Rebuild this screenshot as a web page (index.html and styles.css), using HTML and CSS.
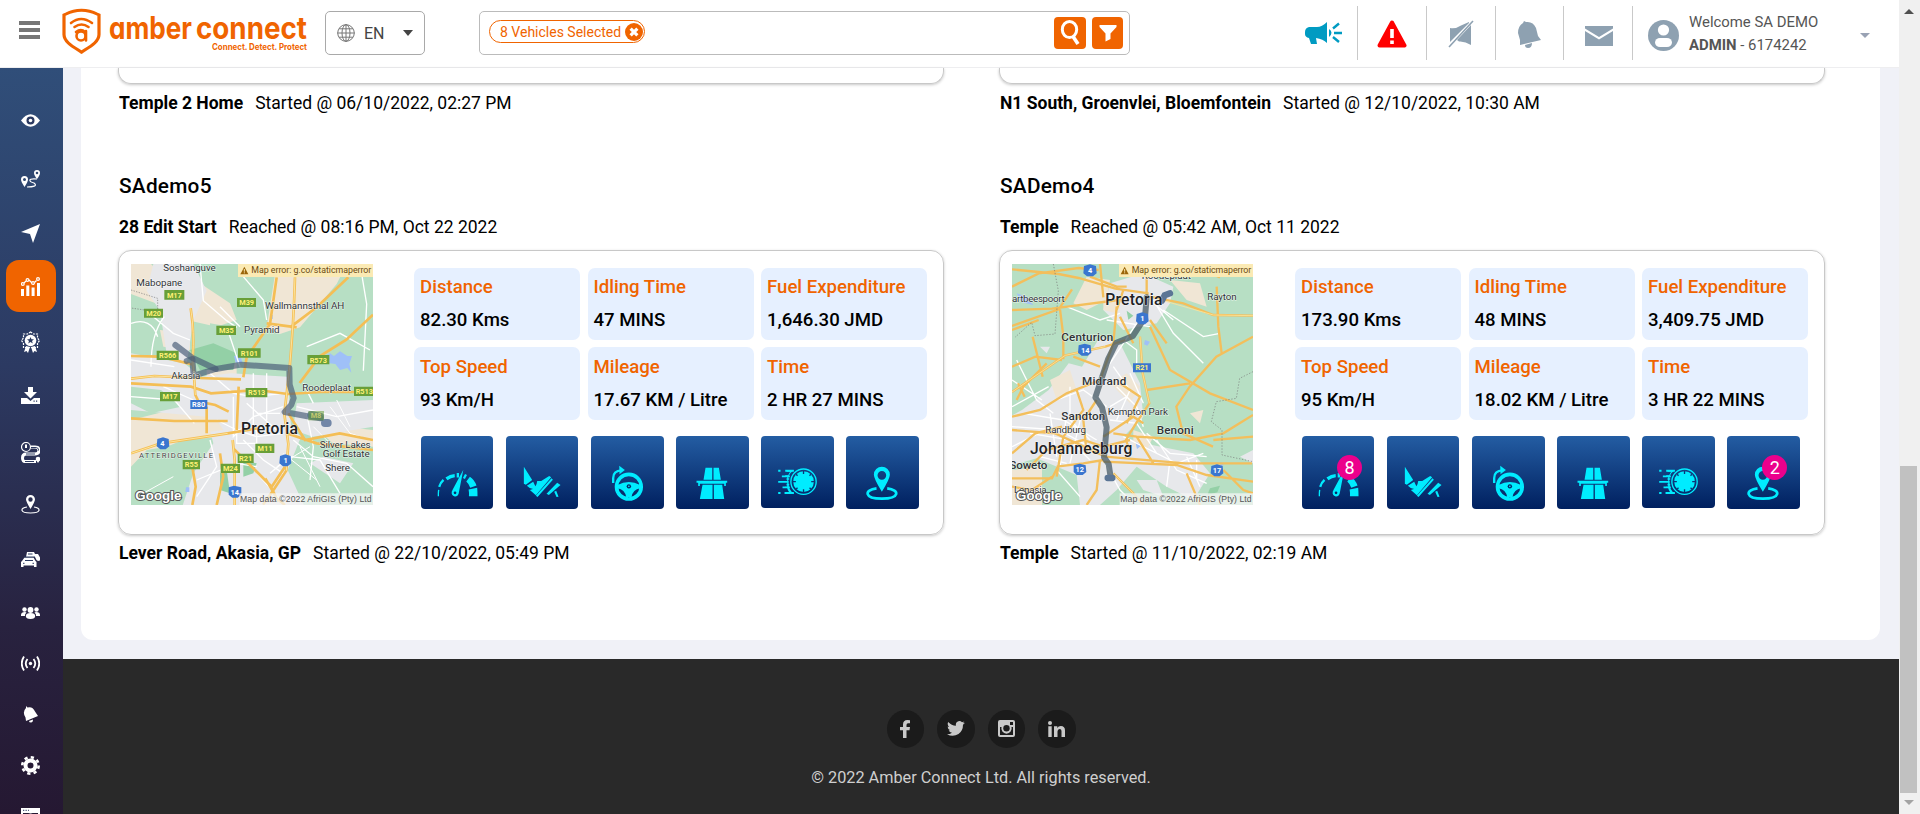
FILE: index.html
```html
<!DOCTYPE html>
<html lang="en">
<head>
<meta charset="utf-8">
<title>Amber Connect</title>
<link rel="stylesheet" href="styles.css">
</head>
<body>
<svg class="defs" width="0" height="0" aria-hidden="true">
  <symbol id="i-speed" viewBox="33 33 219 219">
    <g fill="none" stroke="#00ecff">
      <path d="M85.500 214v-6q0-6 1-13" stroke-width="4"/>
      <path d="M88 186q4-13 13-21" stroke-width="7"/>
      <path d="M110 162q12-9 25-10" stroke-width="10"/>
      <path d="M141 151h7M163 153l6 3" stroke-width="14"/>
    </g>
    <path fill="#00ecff" d="M181 155q14 9 20 27l-19 7q-4-12-12-19zM203 189q1 12 1 25h-26q1-10-1-20zM161 134l-14 72q-3 10-12 9-11-3-9-14l3-7z"/>
    <circle cx="136" cy="204" r="4" fill="#04286a"/>
  </symbol>
  <symbol id="i-pedal" viewBox="291 33 216 219">
    <path fill="#00ecff" d="M344 125l25 40-19 14-6-3zM372 170l9 19-9 3q-12-2-19-10zM384 168h12l24-15 6 4-46 54-18-16q20-4 22-27zM427 160l4 4-46 52-5-4zM444 173l10 7-35 30-7-4zM435 200l6-3 7 18-6 1z"/>
  </symbol>
  <symbol id="i-wheel" viewBox="546 33 216 219">
    <path fill="none" stroke="#00ecff" stroke-width="7" d="M612 174v-15q0-22 25-23"/>
    <path fill="#00ecff" d="M630 122l17 13-16 13z"/>
    <circle cx="659" cy="185" r="37" fill="none" stroke="#00ecff" stroke-width="11"/>
    <path fill="#00ecff" d="M625 180q34-18 68 0v10q-22 4-26 26h-16q-4-22-26-26z"/>
    <circle cx="659" cy="184" r="6.500" fill="#04286a"/><circle cx="659" cy="184" r="2.500" fill="#00ecff"/>
  </symbol>
  <symbol id="i-road" viewBox="801 33 216 219">
    <path fill="#00ecff" d="M889 128h20v36h-26zM913 128h16l6 36h-22zM862 167h92v6h-4v10h-5v-7h-73v7h-5v-10h-5zM880 179h30v43h-38zM914 179h25l6 43h-31z"/>
  </symbol>
  <symbol id="i-fast" viewBox="1056 33 216 216">
    <g fill="none" stroke="#00ecff">
      <circle cx="1183" cy="170" r="38" stroke-width="4"/>
      <path stroke-width="6" d="M1128 137.500h26M1126 204h28M1107 137.500h7M1107 204h7"/>
      <path stroke-width="5" d="M1118 154h24M1107 170.500h31M1120 187h22M1132 162h8M1132 179h8"/>
    </g>
    <path fill="#00ecff" d="M1132 135h23q-23 14-17 40 0 21 17 32h-23v-5h8q-5-7-6-13h-6v-4h6v-30h-6v-4h9q3-7 6-11h-11z"/>
    <circle cx="1183" cy="170" r="31" fill="#00ecff"/>
    <path stroke="#0b3478" stroke-width="4" d="M1183 138v9M1183 193v9M1151 170h9M1206 170h9M1161 148l4 4M1205 148l-4 4M1161 192l4-4M1205 192l-4-4"/>
  </symbol>
  <symbol id="i-pin" viewBox="1311 33 216 219">
    <path fill="#00ecff" fill-rule="evenodd" d="M1418 125a24 24 0 0 1 24 24q0 12-24 51-24-39-24-51a24 24 0 0 1 24-24zm0 13a13 13 0 1 0 0 26 13 13 0 0 0 0-26z"/>
    <path fill="none" stroke="#00ecff" stroke-width="8" d="M1402 190c-38 5-38 31 16 31s55-26 16-31"/>
  </symbol>
</svg>

<div class="app">
  <div class="page">
    <header class="header">
      <button class="burger" aria-label="Menu"><i></i><i></i><i></i></button>
      <svg class="logo" viewBox="0 0 246 46" width="246" height="46" fill="#f06400">
        <path fill="none" stroke="#f06400" stroke-width="3.200" d="M19.500 2.500c-5 0-11 1.500-15.500 4L2 7.500v21c0 8 9 13 17.500 19C28 41.500 37 36.500 37 28.500v-21l-2-1c-4.500-2.500-10.500-4-15.500-4z" transform="scale(1 .93)"/>
        <g fill="none" stroke="#f06400" stroke-width="2.600" stroke-linecap="round"><path d="M9 15q10-8 21 0M12.500 19q7-5 14 0"/><circle cx="19" cy="28" r="4.500"/><path d="M24 23v9.500M14 24q5-4 9 0"/></g>
        <text class="logo-name" x="47" y="31" textLength="83" lengthAdjust="spacingAndGlyphs">amber</text>
        <text class="logo-name" x="134" y="31" textLength="111" lengthAdjust="spacingAndGlyphs">connect</text>
        <text class="logo-tag" x="150" y="42" textLength="95" lengthAdjust="spacingAndGlyphs">Connect. Detect. Protect</text>
      </svg>
      <div class="lang">
        <svg width="18" height="18" viewBox="0 0 18 18" fill="none" stroke="#777" stroke-width="1"><circle cx="9" cy="9" r="8.300"/><ellipse cx="9" cy="9" rx="4" ry="8.300"/><path d="M9 .5v17M.5 9h17M2 4.800h14M2 13.200h14"/></svg>
        <span>EN</span><b class="caret"></b>
      </div>
      <div class="search">
        <div class="pill">8 Vehicles Selected
          <svg width="18" height="18" viewBox="0 0 17 17"><circle cx="8.500" cy="8.500" r="8.500" fill="#f06400"/><path d="M5.300 5.300l6.400 6.400M11.700 5.300l-6.400 6.400" stroke="#fff" stroke-width="3"/></svg>
        </div>
        <button class="sq first"><svg width="20" height="26" viewBox="0 0 20 26" fill="none" stroke="#fff" stroke-width="3"><ellipse cx="9.500" cy="9.500" rx="7.200" ry="8"/><path d="M13 16.500l5 7.500" stroke-width="3.600"/></svg></button>
        <button class="sq"><svg width="18" height="18" viewBox="0 0 18 18" fill="#fff"><path d="M.5 1h17v2l-6 6.500V15l-5 2.500v-8L.5 3z"/></svg></button>
      </div>
      <nav class="tools">
        <span class="tool t1"><svg width="38" height="24" viewBox="0 0 38 24" fill="#009bc2"><path d="M0 11q0-4 4-5h8q5 0 10-5v21q-4-4-11-5l1 6H6l-2-6q-4-1-4-4zM24 8q5 3.500 0 8z"/><path stroke="#009bc2" stroke-width="2.400" d="M28 7.500l6-5M29 12h8M28 16l6 5"/></svg></span>
        <span class="tool"><svg width="30" height="28" viewBox="0 0 30 28"><path d="M15 2.500L27.500 25.500h-25z" fill="red" stroke="red" stroke-width="4" stroke-linejoin="round"/><path d="M15 9v9M15 20.500v3.500" stroke="#fff" stroke-width="3.600"/></svg></span>
        <span class="tool"><svg width="26" height="28" viewBox="0 0 26 28" fill="#8ea1b1"><path d="M2 8q6 1 11-2.500L21 2v1L2 22zM23 5v20q-6-4-12-3.500L9 20z"/><path d="M25 1L1 27" stroke="#8ea1b1" stroke-width="1.600"/></svg></span>
        <span class="tool"><svg width="24" height="28" viewBox="0 0 24 28" fill="#8ea1b1"><path d="M7 1l2 1q7-1 10 6l2 8 3 4L3 25v-5L1 13Q1 6 6 3zM8 25l7-2q0 5-4 5-3 0-3-3z"/></svg></span>
        <span class="tool t5"><svg width="28" height="22" viewBox="0 0 28 22" fill="#8ea1b1"><path d="M0 1h28v2.500L14 12 0 3.500zM0 6l14 8.500L28 6v15H0z"/></svg></span>
        <div class="user">
          <svg width="31" height="31" viewBox="0 0 31 31"><circle cx="15.500" cy="15.500" r="15.500" fill="#8ea1b1"/><circle cx="15.500" cy="10" r="5.600" fill="#fff"/><rect x="7" y="18" width="17" height="9" rx="5" fill="#fff"/></svg>
          <p>Welcome SA DEMO<br><b>ADMIN</b> - 6174242</p>
          <b class="caret light"></b>
        </div>
      </nav>
    </header>

    <div class="body">
      <aside class="side">
        <a style="height:52px"><svg width="19" height="13" viewBox="0 0 19 13"><path d="M0 6.500Q9.500-6 19 6.500 9.500 19 0 6.500z"/><circle class="cut" cx="9.500" cy="6.500" r="4"/><circle cx="9.500" cy="6.500" r="1.800"/></svg></a>
        <a style="height:66px"><svg width="19" height="18" viewBox="0 0 19 18"><path fill-rule="evenodd" d="M3.500 6A3.500 3.500 0 0 1 7 9.500q0 2-3.500 7.500Q0 11.500 0 9.500A3.500 3.500 0 0 1 3.500 6zm0 2a1.500 1.500 0 1 0 0 3 1.500 1.500 0 0 0 0-3zM16 0a3 3 0 0 1 3 3q0 2-3 6-3-4-3-6a3 3 0 0 1 3-3zm0 1.700a1.300 1.300 0 1 0 0 2.600 1.300 1.300 0 0 0 0-2.600z"/><path class="ln" d="M16 9c-10-1-8 2.500-3 4 4 3-1 4-7 4"/></svg></a>
        <a style="height:42px"><svg width="19" height="19" viewBox="0 0 19 19"><path d="M19 0L12 19 9 10 0 8z"/></svg></a>
        <a class="on" style="height:52px"><svg width="19" height="19" viewBox="0 0 19 19"><path d="M0 12h3v7H0zM5.300 8.500h3V19h-3zM10.600 10.500h3V19h-3zM16 6h3v13h-3z"/><path class="ln" d="M3 6l2-2M8 3l3 3M13.500 5.500l2-2"/><g class="ln"><circle cx="1.800" cy="7" r="1.400"/><circle cx="6.500" cy="3" r="1.400"/><circle cx="12" cy="6" r="1.400"/><circle cx="17" cy="2" r="1.400"/></g></svg></a>
        <a style="height:60px"><svg width="19" height="22" viewBox="0 0 19 22"><path class="ln" stroke-dasharray="2 1" d="M9.500 1l3 2 4 0 0 4 2 2.500-2 3 0 4h-14v-4l-2-3 2-2.500V3h4z"/><circle cx="9.500" cy="9.500" r="5.800"/><path class="cut" d="M9.500 6l1 2.300h2.500l-2 1.700.8 2.500-2.300-1.400-2.300 1.400.8-2.500-2-1.700h2.500z"/><path d="M5 15l4 1-2 6-1.500-2L3 21zM14 15l-4 1 2 6 1.500-2 2.500 1z"/></svg></a>
        <a style="height:46px"><svg width="19" height="17" viewBox="0 0 19 17"><path d="M7 0h5v5h4l-6.500 6.500L3 5h4zM0 11h6l3.500 3 3.500-3h6v6H0z"/><path class="cut" d="M12.500 13.500h1.200v1.200h-1.200zM15 13.500h1.200v1.200H15z"/></svg></a>
        <a style="height:68px"><svg width="19" height="21" viewBox="0 0 19 21"><g class="ln" stroke-width="1.600"><circle cx="5" cy="5" r="4.500"/><path d="M5 2.500V6" stroke-width="2"/><path d="M10 5h4q4 0 4 3.500T14 12H5q-3.500 0-3.500 4T5 19.500h10" stroke-width="3"/></g><path class="cutl" d="M10 5.500h4q4 0 3.500 3M14 12H5M4 19.500h9"/><circle cx="17" cy="17" r="2.300"/><path d="M15 18h4l-2 3z"/></svg></a>
        <a style="height:36px"><svg width="19" height="19" viewBox="0 0 19 19"><path fill-rule="evenodd" d="M9.500 0A4.500 4.500 0 0 1 14 4.500q0 2-4.500 9.500Q5 6.500 5 4.500A4.500 4.500 0 0 1 9.500 0zm0 2.300a2.200 2.200 0 1 0 0 4.400 2.200 2.200 0 0 0 0-4.400z"/><path class="ln" stroke-width="1.500" d="M6 12C-1 13-1.500 18 9.500 18S20 13 13 12"/></svg></a>
        <a style="height:73px"><svg width="19" height="16" viewBox="0 0 19 16"><path d="M6 1h7l1 2h3l2 3.500v3l-2 .5-1.500-1-1.500-3H5zM3.500 6.500h9L14.500 10l1 1v5H13v-1.500H2.500V16H0v-5l1-1z"/><path class="cutl" d="M7 3h4.500M4 9.500h8M2 12.300h1.500M11.500 12.300H13M3 6h11"/></svg></a>
        <a style="height:35px"><svg width="19" height="12" viewBox="0 0 19 12"><circle cx="3.500" cy="2.500" r="2.200"/><circle cx="15.500" cy="2.500" r="2.200"/><circle cx="9.500" cy="3" r="2.900"/><path d="M0 8q0-3 4-3 1 0 1.500.5Q3.500 7 4 9H0zM19 8q0-3-4-3-1 0-1.500.5Q15.500 7 15 9h4zM4.800 9q0-3 4.700-3t4.700 3q0 3-4.700 3T4.800 9z"/></svg></a>
        <a style="height:67px"><svg width="19" height="15" viewBox="0 0 19 15"><circle cx="9.500" cy="7.500" r="1.700"/><path class="ln wave" d="M6.500 3q-3.500 4.500 0 9M12.500 3q3.500 4.500 0 9M3 .5q-4.500 7 0 14M16 .5q4.500 7 0 14"/></svg></a>
        <a style="height:34px"><svg width="15" height="17" viewBox="0 0 15 17"><path d="M3 0l1.500 1.500q5-1.500 7.500 4L15 10l-12 5-.5-3.500Q-1 6 3 2zM6 15l4-1.500q0 3-2 3t-2-1.500z"/></svg></a>
        <a style="height:68px"><svg width="19" height="19" viewBox="0 0 19 19"><circle cx="9.500" cy="9.500" r="5" fill="none" stroke="#fff" stroke-width="4"/><circle cx="9.500" cy="9.500" r="8.200" fill="none" stroke="#fff" stroke-width="2.600" stroke-dasharray="3.220 3.220"/></svg></a>
        <a style="height:34px"><svg width="19" height="17" viewBox="0 0 19 17"><path fill-rule="evenodd" d="M0 0h19v17H0zm2 5v12h15V5z"/><path class="cutl" d="M2 2.300h1.300M4.500 2.300h1.300M7 2.300h1"/><circle cx="9.500" cy="10.500" r="5"/><path class="cutl" d="M9.500 7.500V11"/></svg></a>
      </aside>

      <main class="main">
        <section class="panel">
          <div class="trips">
            <article>
              <div class="card stub"></div>
              <p class="line"><b>Temple 2 Home</b>Started @ 06/10/2022, 02:27 PM</p>
            </article>
            <article>
              <div class="card stub"></div>
              <p class="line"><b>N1 South, Groenvlei, Bloemfontein</b>Started @ 12/10/2022, 10:30 AM</p>
            </article>

            <article class="full">
              <h3>SAdemo5</h3>
              <p class="line"><b>28 Edit Start</b>Reached @ 08:16 PM, Oct 22 2022</p>
              <div class="card">
                <svg class="map" viewBox="63 72 726 723" width="242" height="241" preserveAspectRatio="none">
                  <rect x="63" y="72" width="726" height="723" fill="#b7dfc4"/>
                  <g fill="#f0e6d5"><path d="M63 72h60l60 60-40 60-80-30zM270 130l90 60 20 50-60 20-90-20zM500 72h210l-30 60-110 130-60 20-40-20zM63 540l120-30 160 20 10 60-150 10-140 90zM290 370h90v50h-90zM600 550l189 20v50l-120-10zM150 270l90 10v50l-80-10z"/></g>
                  <g fill="#e7e8eb"><path d="M130 72h120l40 80-40 90-20 130-60-30-20-130-40-60zM63 340l160 30 50 40 90-10 170 10 10 150 30 30-40 100 60 130H210l40-120 60-90-20-80-227-20zM560 490l229-10v80l-180 30-60-20zM640 650l90 20-40 60-90-60z"/></g>
                  <g fill="#b7dfc4"><path d="M63 440l90 10 60 50-90 20-60-30zM130 610l110 20-40 80-137 20v-50zM300 250l60 10 20 100-80 10z"/></g>
                  <path fill="#f0e6d5" d="M70 540l80-12 70 14-40 22-110 0zM250 545l70-5 20 30-60 8zM90 610l70-18 60 8-50 20-60 10z"/>
                  <path fill="#93d0a6" d="M240 330l70-20 70 30-10 50-100 0zM400 660l40 10-10 30-30 10zM330 700l20-10 10 70-30-10z"/>
                  <g fill="#9fc0f8"><path d="M640 350l20-10 12 8 18-14 22 14 14 0-8 24 6 26-12-14-22 6-14-18-30-4zM372 348l20 0 5 20-20 0zM480 225l8 0v12h-8zM228 742l10 0v14h-12z"/></g>
                  <g fill="none" stroke="#fff" stroke-width="4">
                    <path d="M123 380q0-100 40-150M270 72l10 110 70 60 30 20M400 110l60 70 10 60M63 360l130 20M130 230l60 50 50 20M350 260l40 120M63 470l130 10 60 70M300 400l70 60 60 10 90-10M370 470v120l60-60 90-30M320 540l60 30 60 20 80-10M400 600l60 60 60 40M550 600l60 50 100 20 79 70M560 500l120 30 109-20M590 520l20 100-10 100M480 700l60-50 90 10 60 100M300 600l20 80-60 90M260 720l120-50 60 10M590 320l100-40 90 50M580 430l30 60M380 570h60v40h-60zM430 400v160M470 400v140M750 72l20 120-10 200M330 200l60 60M63 250q60-20 80 40M160 440l90 40M440 520h70M410 490l90 80"/>
                    <path d="M570 620l60 120M520 640l100 80M610 560l60 60M660 500l60 80 60 20M680 480l40 80M500 680l100-60M440 700l80 90M100 760l90-50" stroke-width="3"/>
                  </g>
                  <g fill="none" stroke="#f4be55" stroke-width="8"><path d="M242 205q12 70 6 150l8 110 10 20 50 10 40 20M63 416l70-8 130 6 130 4M63 430l180 10 60 20 140-10 90 12 100-6 156 0M555 112q-4 140-16 270M539 382q-10 90-16 140l12 90-6 80-40 60-30 42M535 520l50 80 104-20 100 20M63 640l90-30 200-30 90-15M368 600l6 60v135M370 625l110 110 20 40 25 20M290 500v80M386 440l-6 130M789 224l-80 75-80 50-60 80M500 112l-20 140-70 100-10 60M540 262l80-60 95-90M470 250l90 12M63 535l130 8 160 0M330 640l10 70-20 85M245 670l12 70-10 55M485 740l40-60M466 715l40 70M530 580l90 30 169 20M63 348l90 2 100 25"/></g>
                  <g fill="none" stroke="#fde49b" stroke-width="3"><path d="M242 205q12 70 6 150l8 110M555 112q-4 140-16 270-10 90-16 140l12 90-6 80M63 640l90-30 200-30M63 416l70-8 130 6M368 600l6 60v135"/></g>
                  <path fill="none" stroke="#777" stroke-width="2" stroke-dasharray="4 4" d="M63 150l80 25v35l-40 0-40-6"/>
                  <g fill="none" stroke="#4a5d78" stroke-opacity=".68" stroke-width="18" stroke-linejoin="round" stroke-linecap="round"><path d="M196 315l50 38 72 34 75-13 145 10 1 50 12 40-7 20-20 22 80 15 28 4"/><path d="M230 363l17-6 4 50 66-20"/></g>
                  <path stroke="#4a6590" stroke-width="24" stroke-opacity=".75" stroke-linecap="round" d="M604 525l26 5M645 549h8"/>
                  <g class="road"><path d="M163 150h60v29h-60zM102 206h57v27h-57zM381 174h57v27h-57zM319 257h59v28h-59zM140 332h66v28h-66zM384 325h68v28h-68zM592 345h66v28h-66zM407 444h65v28h-65zM150 456h60v28h-60zM732 440h57v28h-57zM436 611h57v28h-57zM383 641h48v28h-48zM218 660h52v28h-52zM332 671h58v28h-58z"/><path opacity=".55" d="M595 513h47v28h-47z"/></g>
                  <g class="shield"><path d="M241 480h51v27h-51zM142 597l17 -5 17 5 2 22-11 9h-16l-11-9zM510 648l16-5 16 5 2 22-11 9h-14l-11-9zM356 742l16-5 22 5 0 22-11 9h-16l-11-9z"/></g>
                  <g class="rt"><text x="193" y="173">M17</text><text x="131" y="228">M20</text><text x="410" y="196">M39</text><text x="349" y="280">M35</text><text x="173" y="354">R566</text><text x="418" y="347">R101</text><text x="625" y="368">R573</text><text x="440" y="466">R513</text><text x="180" y="478">M17</text><text x="763" y="461">R513</text><text x="465" y="633">M11</text><text x="407" y="663">R21</text><text x="244" y="682">R55</text><text x="361" y="693">M24</text><text x="618" y="535" opacity=".6">M8</text><text class="w" x="266" y="502">R80</text><text class="w" x="157" y="619">4</text><text class="w" x="527" y="670">1</text><text class="w" x="374" y="764">14</text></g>
                  <g class="place"><text x="160" y="94" textLength="157">Soshanguve</text><text x="79" y="139" textLength="138">Mabopane</text><text x="465" y="207" textLength="238">Wallmannsthal AH</text><text x="402" y="279" textLength="107">Pyramid</text><text x="184" y="416" textLength="87">Akasia</text><text x="577" y="452" textLength="146">Roodeplaat</text><text x="629" y="623" textLength="153">Silver Lakes</text><text x="638" y="652" textLength="141">Golf Estate</text><text x="646" y="693" textLength="74">Shere</text><text x="87" y="653" textLength="222" class="sm">ATTERIDGEVILLE</text><text x="393" y="581" textLength="171" class="big">Pretoria</text></g>
                  <path fill="#fbeab4" d="M384 72h405v39H384z"/><path fill="#9a6408" d="M403 80l12 23h-24z"/><path stroke="#fbeab4" stroke-width="3" d="M403 87v8M403 97v3"/><text class="err" x="424" y="100" textLength="360">Map error: g.co/staticmaperror</text>
                  <path fill="#f5f5f5" fill-opacity=".75" d="M388 760h401v35H388z"/><text class="copy" x="390" y="785" textLength="395">Map data ©2022 AfriGIS (Pty) Ltd</text><text class="goog" x="76" y="781" textLength="138">Google</text>
                </svg>
                <div class="info">
                  <div class="stats">
                    <dl><dt>Distance</dt><dd>82.30 Kms</dd></dl><dl><dt>Idling Time</dt><dd>47 MINS</dd></dl><dl><dt>Fuel Expenditure</dt><dd>1,646.30 JMD</dd></dl>
                    <dl><dt>Top Speed</dt><dd>93 Km/H</dd></dl><dl><dt>Mileage</dt><dd>17.67 KM / Litre</dd></dl><dl><dt>Time</dt><dd>2 HR 27 MINS</dd></dl>
                  </div>
                  <div class="tiles">
                    <span class="tile"><svg><use href="#i-speed"/></svg></span><span class="tile"><svg><use href="#i-pedal"/></svg></span><span class="tile"><svg><use href="#i-wheel"/></svg></span><span class="tile"><svg><use href="#i-road"/></svg></span><span class="tile short"><svg><use href="#i-fast"/></svg></span><span class="tile"><svg><use href="#i-pin"/></svg></span>
                  </div>
                </div>
              </div>
              <p class="line end"><b>Lever Road, Akasia, GP</b>Started @ 22/10/2022, 05:49 PM</p>
            </article>

            <article class="full">
              <h3>SADemo4</h3>
              <p class="line"><b>Temple</b>Reached @ 05:42 AM, Oct 11 2022</p>
              <div class="card">
                <svg class="map" viewBox="66 72 723 723" width="241" height="241">
                  <rect x="66" y="72" width="723" height="723" fill="#b7dfc4"/>
                  <g fill="#e7e8eb"><path d="M360 130l100-30 90 40-10 50-40 60-100 20-60-60zM330 290l60 20 60 120 10 100-60 60 60 20 150 30 50 60-50 80-80-40-90-60-60 70-50 45h-60l-10-90-120-50-70 20-64 60V560l90-50 80-60 60-80 40 10zM150 320l30 0-10 20zM750 650l39-20v40zM440 720l60 0 20 50-60-20z"/></g>
                  <g fill="#f0e6d5"><path d="M290 110l70 10-10 60-60 30-40-20zM540 120l90 10 20 70-60-20zM340 180l50 10-10 30-40-10zM180 420l60-30 20 60-60 30zM360 430l50-30 40 40-30 50zM430 570l60 20-20 40-40-10zM600 520l40-10-10 40zM66 690l90-10v115H66z"/></g>
                  <g fill="#9fc0f8"><path d="M80 160l30 10 20 25-35-8zM465 300l15 5-8 12-10-4zM436 605l20 10-15 12zM690 666l12 4-8 14z"/></g>
                  <path fill="#93d0a6" d="M410 212l20 15-15 12zM660 745l30-8-8 20-30 8z"/>
                  <g fill="none" stroke="#fff" stroke-width="4"><path d="M490 180l60 100 90 90M520 210l120 80 50-10M440 250l-60 90-40 60M400 300l40 30v60M66 420l90 60M80 360l60 120 50 40M200 480l80-30 70 50M240 440v100l60 60M100 520l120 20 100 60M66 560l140 10 130 70M180 520l20 130M230 520l-20 160M120 580l120 20 60 60M280 500l-40 170M380 440l60 60 20 60M370 380l50 70-40 90M360 540l80 10 60 90M400 590l160 80 80-30M500 600l60 90 90 40M540 660l-10 80M590 650l40 90M200 690l70 80M340 660l50 90 40 40M230 200l100 40 60-20M350 240l130 20M480 180l70 60M420 400l40 90M410 470l-50 30M470 580l70 60 110 10M620 660v60M66 620l80-40M150 650l80 20M66 500l110-60"/></g>
                  <g fill="none" stroke="#f3bf5c" stroke-width="7"><path d="M66 88l140 14 60 12 110 32 100 14M66 140l80-40 120-16 60 6M330 72l10 100M300 110l80 30 30 0M66 210l120-4 200-26M66 258l140-50 40-60M210 208l10 80 0 70M66 270l80-30M66 456l160-110 120-26 60-20M80 480l20-40 70-70M84 430l20 40M128 290l30 120M66 380l70-30 80 10M380 200l-10 110-40 110-100 40-80 50-84 20M450 290l8 110 20 90-40 60-30 50 10 30M480 170l100 20 90 35 119 2M480 260l60 130 120 70 129 50M789 290l-110 60-80 90-40 60 20 80 90 40M600 430l-130 20M685 260l10 80M680 140l5 120M66 570l130 10 150 70 240 20 200 0M340 665l220 10 90 30 139 20M200 680l80-10 60-10M66 715l120 0 20-40M420 600l-80 20-60-20-110 30-60 60M370 580l70 10 160 10 100-20 89-55M370 700l60 60 30 35M260 450l20 60-60 80-20 120M320 480l-40 60 10 100M330 660l-10 90-30 45M440 590l50 80M410 550l40-80-60-40M66 640l70-60 80-20M670 600l119-10M390 230l40 80M400 150l-20 60M66 740l60 10 60-40M470 100v70M480 240l50 70M250 350l80 30M700 690l60 60 29 10M590 700l40 95M340 590l90-60 30 20M600 72l90 40"/></g>
                  <g fill="none" stroke="#fde49b" stroke-width="2.500"><path d="M66 456l160-110 120-26M520 182l150 43 119 2M370 700l60 60M450 290l8 110 20 90"/></g>
                  <path fill="none" stroke="#777" stroke-width="2" stroke-dasharray="4 5" d="M190 72l15 80-10 130-60 5-10-40-50 45M789 395l-40 20-10 60-60 10-15 60 32 25 0 75 93 20"/>
                  <g fill="none" stroke="#465a66" stroke-opacity=".75" stroke-width="18" stroke-linejoin="round" stroke-linecap="round"><path d="M470 172l-5 60-36 56-50 20-25 50-38 114 20 30 14 60-8 90 14 20 6 40"/></g><path stroke="#5b7595" stroke-width="19" stroke-linecap="round" fill="none" d="M516 182l8-16 16-6M353 714h14"/>
                  <g class="shield"><path d="M282 78l18-5 18 5 2 22-11 9h-18l-11-9zM440 222l17-5 17 5 2 22-11 9h-18l-9-9zM266 316l18-5 18 5 2 22-11 9h-18l-11-9zM251 676l18-5 18 5 2 20-11 9h-18l-9-9zM664 678l17-5 17 5 2 22-11 9h-16l-11-9zM429 370h54v27h-54z"/></g>
                  <g class="rt"><text class="w" x="300" y="99">4</text><text class="w" x="457" y="244">1</text><text class="w" x="286" y="338">14</text><text class="w" x="269" y="696">12</text><text class="w" x="681" y="699">17</text><text x="456" y="391">R21</text></g>
                  <g class="place"><text x="455" y="117" textLength="148">Roodeplaat</text><text x="66" y="187" textLength="158">artbeespoort</text><text x="652" y="180" textLength="88">Rayton</text><text class="mid" x="214" y="302" textLength="156">Centurion</text><text class="mid" x="276" y="434" textLength="133">Midrand</text><text x="353" y="524" textLength="181">Kempton Park</text><text class="mid" x="214" y="540" textLength="132">Sandton</text><text x="166" y="578" textLength="122">Randburg</text><text class="mid" x="500" y="581" textLength="111">Benoni</text><text class="big" x="120" y="641" textLength="307">Johannesburg</text><text class="big" x="346" y="195" textLength="171">Pretoria</text><text class="mid" x="58" y="688" textLength="114">Soweto</text><text x="72" y="758" textLength="98">Lenasia</text></g>
                  <path fill="#fbeab4" d="M387 72h402v39H387z"/><path fill="#9a6408" d="M404 80l12 23h-24z"/><path stroke="#fbeab4" stroke-width="3" d="M404 87v8M404 97v3"/><text class="err" x="425" y="100" textLength="359">Map error: g.co/staticmaperror</text>
                  <path fill="#f5f5f5" fill-opacity=".75" d="M389 760h400v35H389z"/><text class="copy" x="391" y="785" textLength="394">Map data ©2022 AfriGIS (Pty) Ltd</text><text class="goog" x="78" y="781" textLength="138">Google</text>
                </svg>
                <div class="info wide">
                  <div class="stats">
                    <dl><dt>Distance</dt><dd>173.90 Kms</dd></dl><dl><dt>Idling Time</dt><dd>48 MINS</dd></dl><dl><dt>Fuel Expenditure</dt><dd>3,409.75 JMD</dd></dl>
                    <dl><dt>Top Speed</dt><dd>95 Km/H</dd></dl><dl><dt>Mileage</dt><dd>18.02 KM / Litre</dd></dl><dl><dt>Time</dt><dd>3 HR 22 MINS</dd></dl>
                  </div>
                  <div class="tiles">
                    <span class="tile"><svg><use href="#i-speed"/></svg><em>8</em></span><span class="tile"><svg><use href="#i-pedal"/></svg></span><span class="tile"><svg><use href="#i-wheel"/></svg></span><span class="tile"><svg><use href="#i-road"/></svg></span><span class="tile short"><svg><use href="#i-fast"/></svg></span><span class="tile"><svg><use href="#i-pin"/></svg><em>2</em></span>
                  </div>
                </div>
              </div>
              <p class="line end"><b>Temple</b>Started @ 11/10/2022, 02:19 AM</p>
            </article>
          </div>
        </section>
        <footer class="footer">
          <div class="social">
            <a><svg width="10" height="18" viewBox="0 0 10 18"><path d="M10 .2v3H8Q6.500 3.200 6.500 5v2H10l-.5 3.200h-3V18H3v-7.800H0V7h3V4.500Q3 0 7.500 0z"/></svg></a>
            <a><svg width="18" height="15" viewBox="0 0 18 15"><path d="M18 1.800l-2 2Q16 10 11.500 13 6 16.500 0 13.300q3 0 5-1.500-2.500-.4-3.300-2.500h1.500Q.6 8 .6 5.500l1.600.5Q-.2 4 1.200 1 4.500 4.600 8.900 4.800 8.300.5 12.300 0q1.600 0 2.700 1.200L17.300.4 16 2.200z"/></svg></a>
            <a><svg width="17" height="17" viewBox="0 0 17 17"><rect width="17" height="17" rx="2"/><path fill="#1b1b1b" d="M12 2h3v3h-3zM2 7h1.500v0a5.200 5.200 0 1 0 10 0H15v8H2z"/><circle cx="8.500" cy="8.200" r="3.200" fill="#1b1b1b"/></svg></a>
            <a><svg width="17" height="16" viewBox="0 0 17 16"><circle cx="2" cy="2" r="2"/><path d="M.3 5.300h3.400V16H.3zM6 5.300h3.300V7Q10.300 5 12.800 5 17 5 17 9.500V16h-3.500v-6q0-2-1.800-2-2.200 0-2.200 2.500V16H6z"/></svg></a>
          </div>
          <p>© 2022 Amber Connect Ltd. All rights reserved.</p>
        </footer>
      </main>
    </div>
  </div>
  <div class="scroll"><i class="up"></i><b></b><i class="down"></i></div>
</div>
</body>
</html>
```

FILE: styles.css
```css
* { box-sizing: border-box; }
body { margin: 0; height: 814px; overflow: hidden; font-family: Roboto, "Liberation Sans", sans-serif; color: #000; background: #fff; }
p, h3, dl, dd { margin: 0; }
button { border: 0; padding: 0; background: none; }
svg { display: block; flex: none; }
.defs { position: absolute; }
.app { display: flex; height: 814px; }
.page { width: 1899px; display: flex; flex-direction: column; }

/* header */
.header { height: 68px; flex: none; display: flex; align-items: flex-start; border-bottom: 1px solid #eeeef0; background: #fff; }
.burger { margin: 21px 22px 0 19px; width: 21px; display: flex; flex-direction: column; gap: 3px; }
.burger i { height: 4px; background: #767676; }
.logo { margin: 8px 0 0; overflow: visible; }
.logo-name { font: 700 31px Inter, sans-serif; font-feature-settings: "cv11"; }
.logo-tag { font: 700 9px Inter, sans-serif; }
.lang { margin: 11px 0 0 17px; width: 100px; height: 44px; border: 1px solid #a9a9a9; border-radius: 5px; display: flex; align-items: center; padding-left: 11px; font-size: 16px; color: #444; }
.lang span { margin: 0 18px 0 9px; width: 21px; }
.caret { border: 5px solid transparent; border-top: 6px solid #444; border-bottom: 0; }
.caret.light { border-top: 5px solid #99a2b4; margin: 2px 0 0 39px; }
.search { margin: 11px 0 0 54px; width: 651px; height: 44px; border: 1px solid #bbb; border-radius: 5px; display: flex; padding: 0 6px 0 9px; }
.pill { margin-top: 8px; width: 156px; height: 23px; border: 1px solid #f06400; border-radius: 12px; display: flex; align-items: center; justify-content: space-between; padding: 0 1px 0 10px; font-size: 14px; color: #f06400; white-space: nowrap; }
.sq { width: 31px; height: 32px; margin: 5px 0 0 6px; background: #f06400; border-radius: 4px; display: flex; align-items: center; justify-content: center; }
.sq.first { margin-left: auto; width: 32px; }
.tools { display: flex; margin: 6px 0 0 158px; }
.tool { width: 68.750px; height: 54px; border-right: 1px solid #c9c9c9; display: flex; align-items: center; justify-content: center; padding-top: 2px; }
.tool.t1 { width: 70px; padding: 0 0 0 3px; }
.tool.t5 { padding: 5px 0 0 2px; }
.user { display: flex; align-items: center; height: 56px; margin-left: 15px; color: #555; font-size: 14.900px; line-height: 23px; }
.user svg { margin-top: 2px; }
.user p { margin: 0 0 0 10px; width: 132px; white-space: nowrap; }

/* sidebar */
.body { flex: 1; display: flex; min-height: 0; }
.side { width: 63px; flex: none; overflow: hidden; display: flex; flex-direction: column; align-items: center; padding: 26px 2px 0 0; background: linear-gradient(#304e79, #2c3a62 40%, #28223f 75%, #251832); }
.side a { display: flex; flex: none; width: 50px; align-items: center; justify-content: center; color: #2b3a61; }
.side a.on { background: #f06400; border-radius: 13px; color: #f06400; margin-top: 6px; }
.side svg { fill: #fff; }
.side .ln { fill: none; stroke: #fff; stroke-width: 1.2; }
.side .wave { stroke-width: 1.8; }
.side .cut { fill: currentColor; }
.side .cutl { fill: none; stroke: currentColor; stroke-width: 1; }

/* content */
.main { flex: 1; min-width: 0; display: flex; flex-direction: column; background: #f0f1f7; }
.panel { height: 572px; margin: 0 19px 19px 18px; background: #fff; border-radius: 0 0 12px 12px; }
.trips { display: grid; grid-template-columns: 826px 826px; column-gap: 55px; padding-left: 37px; }
.card { height: 285px; border: 1px solid #c8c8c8; border-radius: 13px; box-shadow: 0 1px 3px rgba(0,0,0,.22); display: flex; padding: 13px 0 0 12px; }
.card.stub { height: 16px; padding: 0; border-top: 0; border-radius: 0 0 13px 13px; }
.line { margin-top: 8px; padding-left: 1px; font-size: 17.500px; line-height: 22px; white-space: nowrap; }
.line b { font-weight: 700; margin-right: 12px; }
.full h3 { margin: 59px 0 0 1px; font-size: 20.800px; font-weight: 500; line-height: 26px; letter-spacing: .25px; }
.full .line { margin-top: 17px; }
.full .card { margin-top: 12px; }
.full .line.end { margin-top: 7px; }
.map { overflow: hidden; }
.info { margin-left: 41px; padding-top: 4px; width: 514px; }
.info.wide { margin-left: 42px; }
.stats { display: grid; grid-template-columns: repeat(3, 166px); grid-template-rows: 72px 73px; gap: 7px 7.500px; }
.stats dl { background: #e6f0ff; border-radius: 7px; padding-left: 6px; font-size: 18.600px; font-weight: 500; line-height: 22px; white-space: nowrap; }
.stats dt { color: #f06400; margin: 8px 0 11px; }
.stats dl:nth-child(n+4) dt { margin-top: 9px; }
.tiles { display: flex; gap: 12.700px; margin: 16px 0 0 7px; }
.tile { position: relative; flex: none; width: 72.400px; height: 73px; border-radius: 4px; background: linear-gradient(#245da3, #00205f); }
.tile.short { height: 72px; }
.tile svg { width: 100%; height: 100%; }
.tile em { position: absolute; left: 35px; top: 19px; width: 25px; height: 25px; border-radius: 50%; background: #ec008c; color: #fff; font: 18px/25px Roboto, sans-serif; text-align: center; }

/* map labels */
.road { fill: #689f38; }
.shield { fill: #3a76cf; }
.rt { font: 700 22px Roboto, sans-serif; fill: #fff176; text-anchor: middle; }
.rt .w { fill: #fff; }
.place { font: 400 29.500px Roboto, sans-serif; fill: #2f3336; stroke: #fff; stroke-width: 3px; stroke-opacity: .7; paint-order: stroke; }
.place .big { font-size: 47px; font-weight: 500; fill: #202124; }
.place .mid { font-size: 35px; font-weight: 500; }
.place .sm { font-size: 23px; fill: #444; }
.err { font: 26.500px Roboto, sans-serif; fill: #6b4a12; }
.copy { font: 26px "Liberation Sans", sans-serif; fill: #555; }
.goog { font: 700 40px "Liberation Sans", sans-serif; fill: #fff; stroke: #555; stroke-width: 6px; paint-order: stroke; }

/* footer */
.footer { flex: 1; background: #292929; padding-top: 51px; display: flex; flex-direction: column; align-items: center; color: #cfcfcf; font-size: 16.250px; line-height: 20px; }
.social { display: flex; gap: 13px; margin-bottom: 20px; }
.social a { width: 37.500px; height: 37.500px; border-radius: 50%; background: #1b1b1b; display: flex; align-items: center; justify-content: center; }
.social svg { fill: #c9c9c9; }

/* page scrollbar */
.scroll { width: 21px; background: #f0f0f0; display: flex; flex-direction: column; align-items: center; padding: 9px 2px 9px 0; }
.scroll b { width: 17px; height: 327px; background: #c1c1c1; margin: 452px 0 7px; }
.scroll i { border: 5px solid transparent; }
.scroll .up { border-bottom-color: #505050; border-top: 0; }
.scroll .down { border-top-color: #a3a3a3; border-bottom: 0; }
```
